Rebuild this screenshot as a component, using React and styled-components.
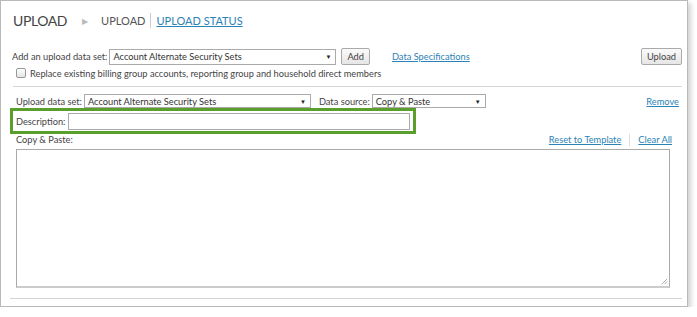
import React from "react";
import styled, { createGlobalStyle } from "styled-components";

const Global = createGlobalStyle`
  body {
    margin: 0;
    background: #fff;
    font-family: Lato, "Open Sans", sans-serif;
    color: #333;
  }
`;

function Upload() {
  return (
    <Frame>
      <Header>
        <Title>UPLOAD</Title>
        <Arrow>▶</Arrow>
        <Crumb>UPLOAD</Crumb>
        <Crumb link>UPLOAD STATUS</Crumb>
      </Header>

      <AddRow>
        <Label>Add an upload data set:</Label>
        <Select width={227}>
          <span>Account Alternate Security Sets</span>
          <Caret>▼</Caret>
        </Select>
        <Button>Add</Button>
        <Link style={{ marginLeft: 22 }}>Data Specifications</Link>
        <Spacer />
        <Button>Upload</Button>
      </AddRow>
      <CheckRow>
        <Check />
        <span>Replace existing billing group accounts, reporting group and household direct members</span>
      </CheckRow>

      <Divider />

      <DataSet>
        <SetRow>
          <Label>Upload data set:</Label>
          <Select width={227} small>
            <span>Account Alternate Security Sets</span>
            <Caret>▼</Caret>
          </Select>
          <Label style={{ marginLeft: 8 }}>Data source:</Label>
          <Select width={114} small>
            <span>Copy &amp; Paste</span>
            <Caret>▼</Caret>
          </Select>
          <Spacer />
          <Link>Remove</Link>
        </SetRow>

        <Highlight>
          <Label>Description:</Label>
          <TextInput />
        </Highlight>

        <PasteRow>
          <Label>Copy &amp; Paste:</Label>
          <Spacer />
          <Link>Reset to Template</Link>
          <Sep />
          <Link>Clear All</Link>
        </PasteRow>

        <TextArea>
          <Grip viewBox="0 0 8 8">
            <path d="M7 1 L1 7 M7 4 L4 7 M7 6.5 L6.5 7" stroke="#888" strokeWidth="0.8" />
          </Grip>
        </TextArea>
      </DataSet>

      <BottomLine />
    </Frame>
  );
}

export default function App() {
  return (
    <>
      <Global />
      <Upload />
    </>
  );
}

const Frame = styled.div`
  width: 688px;
  height: 307px;
  box-sizing: border-box;
  border: 1px solid #b9b9b9;
  box-shadow: 3px 3px 5px rgba(0, 0, 0, 0.18);
  display: flex;
  flex-direction: column;
`;

const Header = styled.div`
  height: 39px;
  display: flex;
  align-items: center;
  padding-left: 12px;
`;

const Title = styled.span`
  font-size: 14px;
  color: #444;
  letter-spacing: -0.4px;
`;

const Arrow = styled.span`
  font-size: 8px;
  color: #bbb;
  margin: 0 8px 0 15px;
`;

const Crumb = styled.span`
  font-size: 11px;
  padding: 0 5px;
  color: ${(p) => (p.link ? "#2b82b5" : "#555")};
  text-decoration: ${(p) => (p.link ? "underline" : "none")};
  border-left: ${(p) => (p.link ? "1px solid #ccc" : "none")};
  line-height: 15px;
`;

const AddRow = styled.div`
  display: flex;
  align-items: center;
  padding: 0 5px 0 11px;
  margin-top: 8px;
  height: 17px;
`;

const Label = styled.span`
  font-size: 9.25px;
  color: #444;
  white-space: nowrap;
  margin-right: 2px;
`;

const Select = styled.div`
  width: ${(p) => p.width}px;
  height: ${(p) => (p.small ? 14 : 16)}px;
  box-sizing: border-box;
  border: 1px solid #aaa;
  display: flex;
  align-items: center;
  justify-content: space-between;
  padding: 0 4px 0 3px;
  font-size: 9.25px;
  color: #333;
  background: #fff;
`;

const Caret = styled.span`
  font-size: 6px;
  color: #222;
`;

const Button = styled.div`
  height: 17px;
  box-sizing: border-box;
  border: 1px solid #aaa;
  border-radius: 2px;
  background: linear-gradient(#fafafa, #e6e6e6);
  font-size: 9.25px;
  color: #444;
  display: flex;
  align-items: center;
  padding: 0 5px;
  margin-left: 5px;
`;

const Link = styled.span`
  font-size: 9.25px;
  color: #2b82b5;
  text-decoration: underline;
  white-space: nowrap;
`;

const Spacer = styled.div`
  flex: 1;
`;

const CheckRow = styled.div`
  display: flex;
  align-items: center;
  padding-left: 15px;
  margin-top: 2px;
  font-size: 9.25px;
  color: #444;
  height: 12px;
`;

const Check = styled.div`
  width: 8px;
  height: 8px;
  border: 1px solid #999;
  border-radius: 2px;
  background: linear-gradient(#fff, #e4e4e4);
  margin-right: 4px;
`;

const Divider = styled.div`
  height: 1px;
  background: #d6d6d6;
  margin: 7px 5px 0 12px;
`;

const DataSet = styled.div`
  display: flex;
  flex-direction: column;
  padding: 0 8px 0 15px;
`;

const SetRow = styled.div`
  display: flex;
  align-items: center;
  margin-top: 7px;
  height: 14px;
`;

const Highlight = styled.div`
  display: flex;
  align-items: center;
  width: 406px;
  height: 26px;
  box-sizing: border-box;
  border: 3px solid #5a9e2b;
  margin-left: -6px;
  padding: 0 3px;
`;

const TextInput = styled.div`
  flex: 1;
  height: 17px;
  box-sizing: border-box;
  border: 1px solid #aaa;
  margin-left: 1px;
`;

const PasteRow = styled.div`
  display: flex;
  align-items: center;
  height: 11px;
  padding-right: 7px;
`;

const Sep = styled.div`
  width: 1px;
  height: 12px;
  background: #ddd;
  margin: 0 8px;
`;

const TextArea = styled.div`
  position: relative;
  margin-top: 4px;
  width: 654px;
  height: 139px;
  box-sizing: border-box;
  border: 1px solid #aaa;
  border-bottom: 2px solid #ccc;
`;

const Grip = styled.svg`
  position: absolute;
  right: 1px;
  bottom: 1px;
  width: 7px;
  height: 7px;
`;

const BottomLine = styled.div`
  height: 1px;
  background: #d4d4d4;
  margin: 10px 5px 0 9px;
`;
